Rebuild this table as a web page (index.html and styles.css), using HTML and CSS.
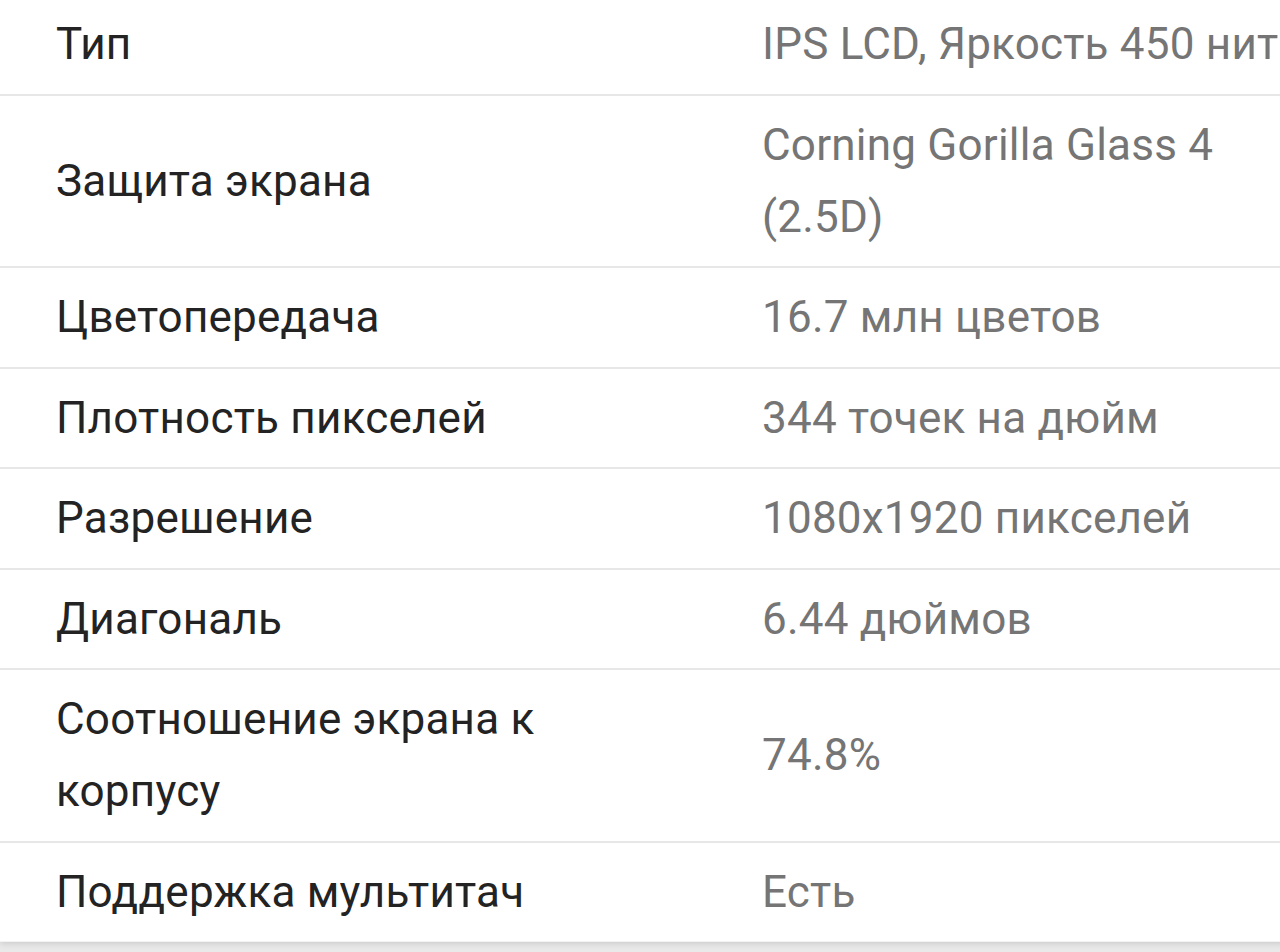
FILE: index.html
```html
<!DOCTYPE html>
<html lang="ru">
<head>
<meta charset="utf-8">
<title>Дисплей</title>
<link rel="stylesheet" href="styles.css">
</head>
<body>
<div class="viewport">
  <div class="card">
    <div class="row"><div class="label">Тип</div><div class="value">IPS LCD, Яркость 450 нит</div></div>
    <div class="row"><div class="label">Защита экрана</div><div class="value">Corning Gorilla Glass 4 (2.5D)</div></div>
    <div class="row"><div class="label">Цветопередача</div><div class="value">16.7 млн цветов</div></div>
    <div class="row"><div class="label">Плотность пикселей</div><div class="value">344 точек на дюйм</div></div>
    <div class="row"><div class="label">Разрешение</div><div class="value">1080x1920 пикселей</div></div>
    <div class="row"><div class="label">Диагональ</div><div class="value">6.44 дюймов</div></div>
    <div class="row"><div class="label">Соотношение экрана к корпусу</div><div class="value">74.8%</div></div>
    <div class="row last"><div class="label">Поддержка мультитач</div><div class="value">Есть</div></div>
  </div>
</div>
</body>
</html>
```
FILE: styles.css
```css
html, body {
  margin: 0;
  padding: 0;
}
body {
  background: #e9e9e9;
  font-family: Roboto, "Noto Sans", "Liberation Sans", sans-serif;
  overflow: hidden;
  height: 952px;
}
.viewport {
  width: 1280px;
  overflow: hidden;
  padding-bottom: 12px;
}
.card {
  width: 1300px;
  margin-top: -5px;
  background: #ffffff;
  box-shadow: 0 2px 6px rgba(0, 0, 0, 0.12);
}
.row {
  display: grid;
  grid-template-columns: 706px 1fr;
  align-items: center;
  border-bottom: 2px solid #e7e7e7;
}
.row.last {
  border-bottom: 1px solid #f3f3f3;
}
.label, .value {
  font-size: 44px;
  line-height: 72px;
  letter-spacing: 0.22px;
  padding: 13px 0 13.5px 56px;
}
.label {
  color: #232323;
  padding-right: 150px;
}
.value {
  color: #757575;
}
```
